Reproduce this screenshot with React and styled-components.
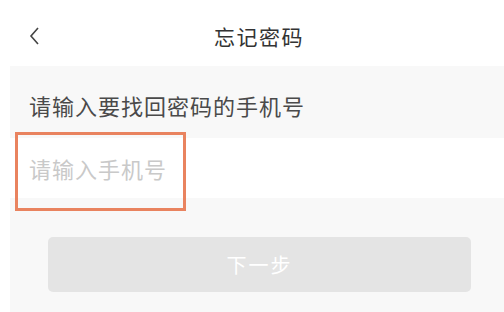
import React from "react"
import styled, { createGlobalStyle } from "styled-components"

const GlobalStyle = createGlobalStyle`
  html, body {
    margin: 0;
    padding: 0;
    background: #ffffff;
    font-family: "Noto Sans CJK SC", "Noto Sans", sans-serif;
  }
`

const Page = styled.div`
  width: 504px;
  height: 312px;
  overflow: hidden;
  display: flex;
  flex-direction: column;
  background: #ffffff;
`

const Header = styled.div`
  position: relative;
  height: 66px;
  display: flex;
  align-items: center;
  justify-content: center;
  flex-shrink: 0;
`

const Back = styled.button`
  position: absolute;
  left: 24px;
  top: 24px;
  width: 20px;
  height: 24px;
  padding: 0;
  border: none;
  background: none;
  display: flex;
  align-items: center;
  justify-content: center;
`

const Title = styled.h1`
  margin: 0 0 -6px 14px;
  font-size: 21px;
  font-weight: 400;
  color: #333333;
  letter-spacing: 1.5px;
`

const Body = styled.div`
  flex: 1;
  margin-left: 10px;
  background: #f8f8f8;
  display: flex;
  flex-direction: column;
`

const Label = styled.div`
  height: 72px;
  display: flex;
  align-items: center;
  padding: 6px 0 0 19px;
  box-sizing: border-box;
  font-size: 22px;
  color: #4a4a4a;
  letter-spacing: 1px;
`

const InputRow = styled.div`
  position: relative;
  height: 60px;
  background: #ffffff;
  display: flex;
  align-items: center;
  padding-left: 19px;
`

const Input = styled.input`
  flex: 1;
  border: none;
  outline: none;
  background: transparent;
  font-family: inherit;
  font-size: 22px;
  color: #333;
  padding: 0;
  letter-spacing: 1px;

  &::placeholder {
    color: #c9c9c9;
  }
`

const Highlight = styled.div`
  position: absolute;
  left: 5px;
  top: -6px;
  width: 171px;
  height: 79px;
  box-sizing: border-box;
  border: 3px solid #e9835f;
  pointer-events: none;
`

const Actions = styled.div`
  padding: 39px 33px 0 38px;
`

const NextButton = styled.button`
  width: 100%;
  height: 55px;
  border: none;
  border-radius: 5px;
  background: #e4e4e4;
  color: #ffffff;
  font-family: inherit;
  font-size: 20px;
  letter-spacing: 2px;
`

export default function App() {
  return (
    <>
      <GlobalStyle />
      <Page>
        <Header>
          <Back aria-label="返回">
            <svg width="12" height="20" viewBox="0 0 12 20">
              <path d="M10 2 L3 10 L10 18" fill="none" stroke="#444" strokeWidth="1.6" />
            </svg>
          </Back>
          <Title>忘记密码</Title>
        </Header>
        <Body>
          <Label>请输入要找回密码的手机号</Label>
          <InputRow>
            <Input placeholder="请输入手机号" />
            <Highlight />
          </InputRow>
          <Actions>
            <NextButton>下一步</NextButton>
          </Actions>
        </Body>
      </Page>
    </>
  )
}
